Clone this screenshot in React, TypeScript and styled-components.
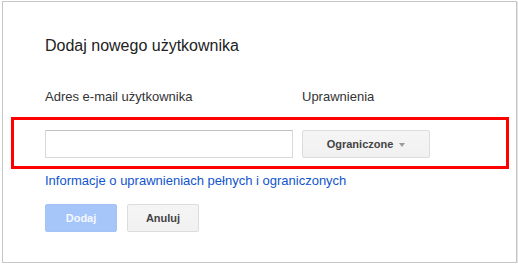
import React, { useState } from 'react';
import styled, { createGlobalStyle } from 'styled-components';

const GlobalStyle = createGlobalStyle`
  html, body {
    margin: 0;
    padding: 0;
    background: #fff;
  }
  body {
    font-family: "Liberation Sans", Arial, sans-serif;
  }
`;

const Dialog = styled.div`
  box-sizing: border-box;
  margin: 1px 0 0 2px;
  width: 515px;
  height: 262px;
  border: 1px solid #c6c6c6;
  box-shadow: 1px 1px 0 #e4e4e4;
  background: #fff;
  padding: 34px 42px 0 42px;
`;

const Title = styled.div`
  font-size: 16px;
  line-height: 20px;
  color: #222;
`;

const Columns = styled.div`
  display: grid;
  grid-template-columns: 248px 128px;
  column-gap: 9px;
`;

const Labels = styled(Columns)`
  margin-top: 33px;
`;

const Label = styled.div`
  font-size: 13px;
  line-height: 16px;
  color: #333;
`;

const Highlight = styled(Columns)`
  margin: 12px -35px 0 -34px;
  padding: 10px 0 8px 31px;
  border: 3px solid #f00;
`;

const EmailInput = styled.input`
  box-sizing: border-box;
  height: 28px;
  width: 100%;
  margin: 0;
  padding: 0 8px;
  border: 1px solid #d9d9d9;
  border-top-color: #c0c0c0;
  border-radius: 1px;
  font-family: inherit;
  font-size: 13px;
  outline: none;
`;

const Button = styled.button<{ $primary?: boolean }>`
  box-sizing: border-box;
  height: 28px;
  min-width: 72px;
  padding: 0 8px;
  border-radius: 2px;
  font-family: inherit;
  font-size: 11px;
  font-weight: bold;
  cursor: default;
  border: 1px solid ${p => (p.$primary ? '#a6c3f6' : '#dcdcdc')};
  background: ${p => (p.$primary ? '#a6c6fa' : 'linear-gradient(#f5f5f5, #f1f1f1)')};
  color: ${p => (p.$primary ? '#f4f8ff' : '#444')};
`;

const Select = styled(Button)`
  display: flex;
  align-items: center;
  justify-content: center;
  gap: 6px;
  width: 128px;
`;

const Arrow = styled.span`
  width: 0;
  height: 0;
  margin-top: 1px;
  border-left: 3.5px solid transparent;
  border-right: 3.5px solid transparent;
  border-top: 4px solid #9a9a9a;
`;

const HelpLink = styled.a`
  display: block;
  margin-top: 4px;
  font-size: 13px;
  line-height: 16px;
  color: #15c;
  text-decoration: none;
`;

const Actions = styled.div`
  display: flex;
  gap: 10px;
  margin-top: 15px;
`;

const App: React.FC = () => {
  const [email, setEmail] = useState('');

  return (
    <>
      <GlobalStyle />
      <Dialog>
        <Title>Dodaj nowego użytkownika</Title>
        <Labels>
          <Label>Adres e-mail użytkownika</Label>
          <Label>Uprawnienia</Label>
        </Labels>
        <Highlight>
          <EmailInput value={email} onChange={e => setEmail(e.target.value)} />
          <Select>
            Ograniczone
            <Arrow />
          </Select>
        </Highlight>
        <HelpLink href="#">Informacje o uprawnieniach pełnych i ograniczonych</HelpLink>
        <Actions>
          <Button $primary disabled={!email}>Dodaj</Button>
          <Button>Anuluj</Button>
        </Actions>
      </Dialog>
    </>
  );
};

export default App;
